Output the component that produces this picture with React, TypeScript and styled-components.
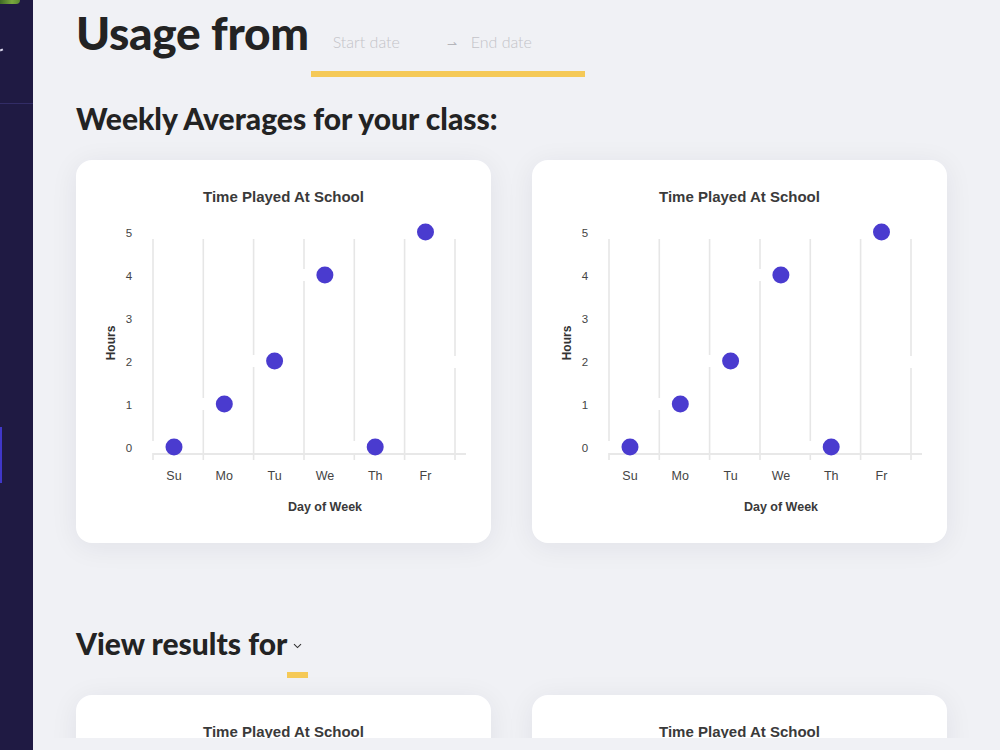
import React from 'react';
import styled, { createGlobalStyle } from 'styled-components';

const GlobalStyle = createGlobalStyle`
  html, body {
    margin: 0;
    padding: 0;
    background: #f0f1f5;
    font-family: "Lato", "Open Sans", sans-serif;
    overflow: hidden;
  }
`;

const Shell = styled.div`
  display: flex;
  width: 1000px;
  height: 750px;
  background: #f0f1f5;
`;

const Sidebar = styled.nav`
  width: 33px;
  flex-shrink: 0;
  background: #1f1a43;
  display: flex;
  flex-direction: column;
  overflow: hidden;
`;

const LogoArea = styled.div`
  height: 103px;
  border-bottom: 1px solid #322c66;
  display: flex;
  flex-direction: column;
`;

const Leaf = styled.div`
  width: 20px;
  height: 4px;
  background: linear-gradient(90deg, #3f6a25, #79a83e 60%, #5b8a30);
  border-radius: 0 0 8px 0;
`;

const CollapseMark = styled.div`
  margin-top: 45px;
  width: 3px;
  height: 2px;
  background: #d8d6ea;
  transform: rotate(-25deg);
`;

const NavItem = styled.div<{ $active?: boolean }>`
  margin-top: 323px;
  height: 56px;
  border-left: 2px solid ${(p) => (p.$active ? '#4037c9' : 'transparent')};
`;

const Main = styled.main`
  flex: 1;
  height: 738px;
  overflow: hidden;
  padding-left: 43px;
  box-sizing: border-box;
`;

const HeaderRow = styled.div`
  display: flex;
  align-items: flex-start;
  height: 78px;
`;

const PageTitle = styled.h1`
  margin: 5px 0 0;
  font-size: 46px;
  font-weight: 900;
  color: #232323;
  letter-spacing: -0.3px;
  line-height: 56px;
`;

const DateRange = styled.div`
  margin-left: 2px;
  width: 274px;
  height: 77px;
  box-sizing: border-box;
  padding: 12px 0 0 22px;
  border-bottom: 6px solid #f5c957;
  display: flex;
  align-items: center;
`;

const DateText = styled.span<{ $w: number }>`
  width: ${(p) => p.$w}px;
  font-size: 16px;
  font-weight: 300;
  color: #c3c3c8;
  white-space: nowrap;
`;

const RangeArrow = styled.span`
  width: 24px;
  font-size: 12px;
  color: #b5b5ba;
  padding-top: 4px;
`;

const SectionTitle = styled.h2<{ $top: number }>`
  margin: ${(p) => p.$top}px 0 0;
  font-size: 30px;
  font-weight: 900;
  color: #232323;
  line-height: 36px;
  display: flex;
  align-items: center;
`;

const Dropdown = styled.span`
  position: relative;
  margin-left: 0;
  width: 21px;
  height: 36px;
  display: flex;
  justify-content: center;
  align-items: center;
  padding-top: 6px;
  box-sizing: border-box;

  &::after {
    content: '';
    position: absolute;
    left: 0;
    right: 0;
    bottom: -17px;
    height: 6px;
    background: #f5c957;
  }
`;

const CardGrid = styled.div<{ $top: number }>`
  margin-top: ${(p) => p.$top}px;
  display: grid;
  grid-template-columns: 415px 415px;
  gap: 41px;
`;

const Card = styled.div`
  height: 383px;
  background: #ffffff;
  border-radius: 16px;
  box-shadow: 0 4px 28px rgba(30, 30, 60, 0.07);
  overflow: hidden;
`;

const chartFont = '"Liberation Sans", Arial, sans-serif';

const days = ['Su', 'Mo', 'Tu', 'We', 'Th', 'Fr'];
const values = [0, 1, 2, 4, 0, 5];
const gridX = [77, 127.3, 177.6, 228, 278.3, 328.6, 379];

function TimeChart() {
  const yOf = (v: number) => 287 - 43 * v;
  return (
    <svg width="415" height="383" viewBox="0 0 415 383" fontFamily={chartFont}>
      <text x="207.5" y="42" textAnchor="middle" fontSize="15" fontWeight="700" fill="#3a3a3a">
        Time Played At School
      </text>
      {gridX.map((x) => (
        <line key={x} x1={x} x2={x} y1={79} y2={300} stroke="#e6e6e6" strokeWidth={1.6} />
      ))}
      <line x1={77} x2={390} y1={294} y2={294} stroke="#e8e8e8" strokeWidth={2} />
      {values.map((v, i) => (
        <line key={'gap' + i} x1={gridX[i]} x2={gridX[i]} y1={yOf(v) - 6} y2={yOf(v) + 6} stroke="#fff" strokeWidth={3} />
      ))}
      <line x1={379} x2={379} y1={196} y2={208} stroke="#fff" strokeWidth={3} />
      {[0, 1, 2, 3, 4, 5].map((v) => (
        <text key={v} x="53" y={yOf(v) + 5} textAnchor="middle" fontSize="11.5" fill="#444">
          {v}
        </text>
      ))}
      <text
        x="0"
        y="0"
        transform="translate(39 183) rotate(-90)"
        textAnchor="middle"
        fontSize="12"
        fontWeight="700"
        fill="#333"
      >
        Hours
      </text>
      {values.map((v, i) => (
        <circle key={i} cx={98 + i * 50.3} cy={yOf(v)} r={8.5} fill="#4a3bcf" />
      ))}
      {days.map((d, i) => (
        <text key={d} x={98 + i * 50.3} y="320" textAnchor="middle" fontSize="12.5" fill="#444">
          {d}
        </text>
      ))}
      <text x="249" y="351" textAnchor="middle" fontSize="12.5" fontWeight="700" fill="#3a3a3a">
        Day of Week
      </text>
    </svg>
  );
}

function ChevronDown() {
  return (
    <svg width="9" height="6" viewBox="0 0 9 6">
      <path d="M1 1.2 L4.5 4.6 L8 1.2" fill="none" stroke="#333" strokeWidth="1.1" />
    </svg>
  );
}

export default function App() {
  return (
    <>
      <GlobalStyle />
      <Shell>
        <Sidebar>
          <LogoArea>
            <Leaf />
            <CollapseMark />
          </LogoArea>
          <NavItem $active />
        </Sidebar>
        <Main>
          <HeaderRow>
            <PageTitle>Usage from</PageTitle>
            <DateRange>
              <DateText $w={114}>Start date</DateText>
              <RangeArrow>⇀</RangeArrow>
              <DateText $w={80}>End date</DateText>
            </DateRange>
          </HeaderRow>
          <SectionTitle $top={22}>Weekly Averages for your class:</SectionTitle>
          <CardGrid $top={24}>
            <Card>
              <TimeChart />
            </Card>
            <Card>
              <TimeChart />
            </Card>
          </CardGrid>
          <SectionTitle $top={82}>
            View results for
            <Dropdown>
              <ChevronDown />
            </Dropdown>
          </SectionTitle>
          <CardGrid $top={34}>
            <Card>
              <TimeChart />
            </Card>
            <Card>
              <TimeChart />
            </Card>
          </CardGrid>
        </Main>
      </Shell>
    </>
  );
}
